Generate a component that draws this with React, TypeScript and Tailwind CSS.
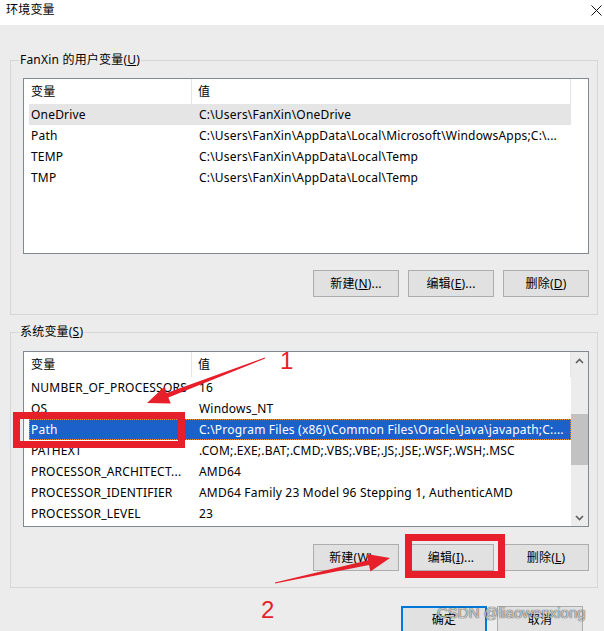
import React from "react";

const userRows = [
  { name: "OneDrive", value: "C:\\Users\\FanXin\\OneDrive", sel: "grey" },
  { name: "Path", value: "C:\\Users\\FanXin\\AppData\\Local\\Microsoft\\WindowsApps;C:\\...", sel: "" },
  { name: "TEMP", value: "C:\\Users\\FanXin\\AppData\\Local\\Temp", sel: "" },
  { name: "TMP", value: "C:\\Users\\FanXin\\AppData\\Local\\Temp", sel: "" },
];

const sysRows = [
  { name: "NUMBER_OF_PROCESSORS", value: "16", sel: "" },
  { name: "OS", value: "Windows_NT", sel: "" },
  { name: "Path", value: "C:\\Program Files (x86)\\Common Files\\Oracle\\Java\\javapath;C:...", sel: "blue" },
  { name: "PATHEXT", value: ".COM;.EXE;.BAT;.CMD;.VBS;.VBE;.JS;.JSE;.WSF;.WSH;.MSC", sel: "" },
  { name: "PROCESSOR_ARCHITECT...", value: "AMD64", sel: "" },
  { name: "PROCESSOR_IDENTIFIER", value: "AMD64 Family 23 Model 96 Stepping 1, AuthenticAMD", sel: "" },
  { name: "PROCESSOR_LEVEL", value: "23", sel: "" },
];

function Row({ name, value, sel }: { name: string; value: string; sel: string }) {
  const base = "h-[21px] ml-[5px] flex items-center whitespace-nowrap";
  const cls =
    sel === "blue"
      ? base + " bg-[#1c60cb] text-white border border-dotted border-[#f0953a]"
      : sel === "grey"
      ? base + " bg-[#e5e5e5]"
      : base;
  return (
    <div className={cls}>
      <div className={sel === "blue" ? "w-[162px] pl-[1px] overflow-hidden" : "w-[163px] pl-[2px] overflow-hidden"}>{name}</div>
      <div className="flex-1 pl-[7px] overflow-hidden">{value}</div>
    </div>
  );
}

function Header() {
  return (
    <div className="h-[25px] flex items-center bg-white">
      <div className="w-[168px] h-full pl-[7px] flex items-center border-r border-[#e5e5e5]">变量</div>
      <div className="flex-1 h-full pl-[6px] flex items-center border-r border-[#e5e5e5]">值</div>
    </div>
  );
}

function Btn({ children, def }: { children: React.ReactNode; def?: boolean }) {
  return (
    <div
      className={
        def
          ? "w-[86px] h-[27px] flex items-center justify-center bg-[#e1e1e1] border-2 border-[#0078d7]"
          : "w-[86px] h-[27px] flex items-center justify-center bg-[#e1e1e1] border border-[#adadad]"
      }
    >
      {children}
    </div>
  );
}

function Chevron({ up }: { up?: boolean }) {
  return (
    <svg width="9" height="6" viewBox="0 0 9 6">
      <path d={up ? "M1 5 L4.5 1.5 L8 5" : "M1 1 L4.5 4.5 L8 1"} fill="none" stroke="#606060" strokeWidth="1.6" />
    </svg>
  );
}

export default function App() {
  return (
    <div className="relative w-[604px] h-[631px] overflow-hidden bg-[#ececec] text-[12px] tracking-[0.2px] text-black font-['Noto_Sans','Noto_Sans_CJK_SC',sans-serif]">
      {/* Title bar */}
      <div className="h-[25px] bg-white flex items-start justify-between pl-[6px] pr-[2px] pt-[2px] leading-[16px]">
        <span>环境变量</span>
        <svg width="11" height="11" viewBox="0 0 11 11" className="mt-[3px]">
          <path d="M0.5 0.5 L10.5 10.5 M10.5 0.5 L0.5 10.5" stroke="#111" strokeWidth="1" />
        </svg>
      </div>

      <div className="pl-[10px] pr-[6px] pt-[35px]">
        {/* User variables group */}
        <div className="relative border border-[#d6d6d6] pt-[17px] pl-[12px] pr-[8px] pb-[17px]">
          <div className="absolute left-[8px] top-[-9px] px-[1px] bg-[#ececec] leading-[16px]">
            FanXin 的用户变量(<u>U</u>)
          </div>
          <div className="h-[176px] border border-[#828790] bg-white flex">
            <div className="w-[547px]">
              <Header />
              {userRows.map((r) => (
                <Row key={r.name} {...r} />
              ))}
            </div>
          </div>
          <div className="mt-[16px] flex justify-end gap-[9px]">
            <Btn>
              新建(<u>N</u>)...
            </Btn>
            <Btn>
              编辑(<u>E</u>)...
            </Btn>
            <Btn>
              删除(<u>D</u>)
            </Btn>
          </div>
        </div>

        {/* System variables group */}
        <div className="relative mt-[17px] border border-[#d6d6d6] pt-[18px] pl-[12px] pr-[8px] pb-[16px]">
          <div className="absolute left-[8px] top-[-9px] px-[1px] bg-[#ececec] leading-[16px]">
            系统变量(<u>S</u>)
          </div>
          <div className="h-[176px] border border-[#828790] bg-white flex">
            <div className="w-[547px]">
              <Header />
              {sysRows.map((r) => (
                <Row key={r.name} {...r} />
              ))}
            </div>
            <div className="w-[17px] flex flex-col bg-[#ececec]">
              <div className="h-[17px] flex items-center justify-center">
                <Chevron up />
              </div>
              <div className="flex-1">
                <div className="mt-[45px] h-[51px] bg-[#c2c2c2]" />
              </div>
              <div className="h-[17px] flex items-center justify-center">
                <Chevron />
              </div>
            </div>
          </div>
          <div className="mt-[17px] flex justify-end gap-[9px]">
            <Btn>
              新建(<u>W</u>)...
            </Btn>
            <Btn>
              编辑(<u>I</u>)...
            </Btn>
            <Btn>
              删除(<u>L</u>)
            </Btn>
          </div>
        </div>

        {/* Dialog buttons */}
        <div className="mt-[18px] mr-[15px] flex justify-end gap-[10px]">
          <Btn def>确定</Btn>
          <Btn>取消</Btn>
        </div>
      </div>

      {/* Red annotations */}
      <div className="absolute left-[13px] top-[412px] w-[172px] h-[36px] border-[7px] border-[#e61f2a]" />
      <div className="absolute left-[405px] top-[534px] w-[100px] h-[44px] border-[7px] border-[#e61f2a]" />
      <svg className="absolute left-0 top-0 pointer-events-none" width="604" height="631" viewBox="0 0 604 631">
        <polygon
          points="264.8,357.5 166.6,392.9 164.3,386.8 147,403 170.7,403.6 168.4,397.5 265.2,358.5"
          fill="#e61f2a"
        />
        <polygon
          points="275.1,583.5 369.0,565.1 370.4,571.5 390,558 366.6,553.9 368.0,560.3 274.9,582.5"
          fill="#e61f2a"
        />
      </svg>
      <div className="absolute left-[280px] top-[349px] text-[24px] leading-none text-[#e61f2a] font-['Liberation_Sans',sans-serif]">
        1
      </div>
      <div className="absolute left-[261px] top-[598px] text-[24px] leading-none text-[#e61f2a] font-['Liberation_Sans',sans-serif]">
        2
      </div>

      {/* Watermark */}
      <div className="absolute left-[437px] top-[605px] text-[15px] tracking-normal leading-none text-white/75 font-['Liberation_Sans',sans-serif] [text-shadow:0_0_1px_rgba(0,0,0,0.8),0_0_1px_rgba(0,0,0,0.5)] whitespace-nowrap">
        CSDN @liaowenxiong
      </div>
    </div>
  );
}
